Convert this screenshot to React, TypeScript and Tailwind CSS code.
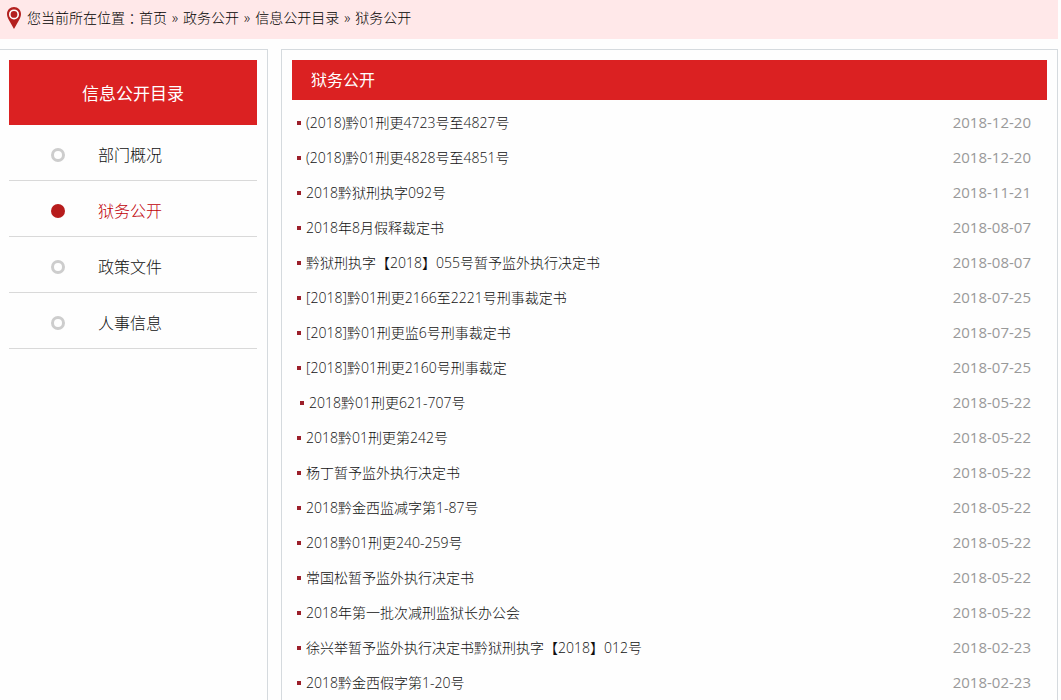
import React from "react";

const menu = [
  { label: "部门概况", active: false },
  { label: "狱务公开", active: true },
  { label: "政策文件", active: false },
  { label: "人事信息", active: false },
];

const crumbs = ["首页", "政务公开", "信息公开目录", "狱务公开"];

const articles = [
  { title: "(2018)黔01刑更4723号至4827号", date: "2018-12-20" },
  { title: "(2018)黔01刑更4828号至4851号", date: "2018-12-20" },
  { title: "2018黔狱刑执字092号", date: "2018-11-21" },
  { title: "2018年8月假释裁定书", date: "2018-08-07" },
  { title: "黔狱刑执字【2018】055号暂予监外执行决定书", date: "2018-08-07" },
  { title: "[2018]黔01刑更2166至2221号刑事裁定书", date: "2018-07-25" },
  { title: "[2018]黔01刑更监6号刑事裁定书", date: "2018-07-25" },
  { title: "[2018]黔01刑更2160号刑事裁定", date: "2018-07-25" },
  { title: "2018黔01刑更621-707号", date: "2018-05-22", indent: true },
  { title: "2018黔01刑更第242号", date: "2018-05-22" },
  { title: "杨丁暂予监外执行决定书", date: "2018-05-22" },
  { title: "2018黔金西监减字第1-87号", date: "2018-05-22" },
  { title: "2018黔01刑更240-259号", date: "2018-05-22" },
  { title: "常国松暂予监外执行决定书", date: "2018-05-22" },
  { title: "2018年第一批次减刑监狱长办公会", date: "2018-05-22" },
  { title: "徐兴举暂予监外执行决定书黔狱刑执字【2018】012号", date: "2018-02-23" },
  { title: "2018黔金西假字第1-20号", date: "2018-02-23" },
];

function PinIcon() {
  return (
    <svg className="w-[14px] h-[22px] shrink-0" viewBox="0 0 14 22" aria-hidden="true">
      <path
        d="M7 0C3.1 0 0 3.1 0 7c0 2.6 1.3 4.9 2.6 7.2L7 22l4.4-7.8C12.7 11.9 14 9.6 14 7c0-3.9-3.1-7-7-7z"
        fill="#b3201f"
      />
      <circle cx="7" cy="7.4" r="4.2" fill="none" stroke="#fff" strokeWidth="1.6" />
    </svg>
  );
}

function Breadcrumb() {
  return (
    <nav
      aria-label="您当前所在位置"
      className="flex items-center h-[39px] pl-[7px] pb-[3px] gap-[6px] bg-[#ffe8e9] text-black"
    >
      <PinIcon />
      <div className="flex items-center">
        <span>您当前所在位置</span>
        <span className="font-['Noto_Sans_CJK_TC',sans-serif]">：</span>
        <ol className="flex items-center gap-[5px]">
          {crumbs.map((crumb, index) => (
            <li key={crumb} className="flex items-center gap-[5px]">
              {index > 0 && <span>»</span>}
              <a href="#">{crumb}</a>
            </li>
          ))}
        </ol>
      </div>
    </nav>
  );
}

function Sidebar() {
  return (
    <aside className="w-[268px] shrink-0 border-t border-r border-[#d5dade] pt-[10px] pl-[9px] pr-[10px]">
      <h2 className="h-[65px] leading-[67px] bg-[#db2122] text-center text-[17px] font-normal text-white">
        信息公开目录
      </h2>
      <ul>
        {menu.map((item) => (
          <li key={item.label} className="border-b border-[#d9d9d9]">
            <a
              href="#"
              className={`flex items-center h-[55px] pl-[42px] pt-[5px] gap-[33px] text-[16px] ${
                item.active ? "text-[#c00008]" : "text-[#111]"
              }`}
            >
              <span
                className={`size-[14px] rounded-full ${
                  item.active ? "bg-[#b71c1c]" : "border-3 border-[#cdcdcd]"
                }`}
              />
              {item.label}
            </a>
          </li>
        ))}
      </ul>
    </aside>
  );
}

function ArticleList() {
  return (
    <main className="flex-1 min-w-0 border-t border-x border-[#d5dade] pt-[10px] px-[10px]">
      <h1 className="h-[40px] leading-[40px] pl-[19px] bg-[#db2122] text-[16px] font-normal text-white">
        狱务公开
      </h1>
      <ul className="pt-[5px] pl-[5px] pr-[16px]">
        {articles.map((article) => (
          <li key={article.title} className="flex items-center justify-between h-[35px]">
            <a
              href="#"
              className={`flex items-center gap-[5px] ${article.indent ? "pl-[3px]" : ""}`}
            >
              <span className="size-1 bg-[#9c1f2a]" />
              {article.title}
            </a>
            <time className="pb-[2px] text-[15px] font-normal text-[#999]">{article.date}</time>
          </li>
        ))}
      </ul>
    </main>
  );
}

export default function App() {
  return (
    <div className="min-h-screen pr-[3px] bg-[#fefefe] font-['Open_Sans','Noto_Sans_CJK_SC',sans-serif] font-light text-[14px] leading-[20px] text-[#111]">
      <Breadcrumb />
      <div className="flex gap-[13px] pt-[10px]">
        <Sidebar />
        <ArticleList />
      </div>
    </div>
  );
}
